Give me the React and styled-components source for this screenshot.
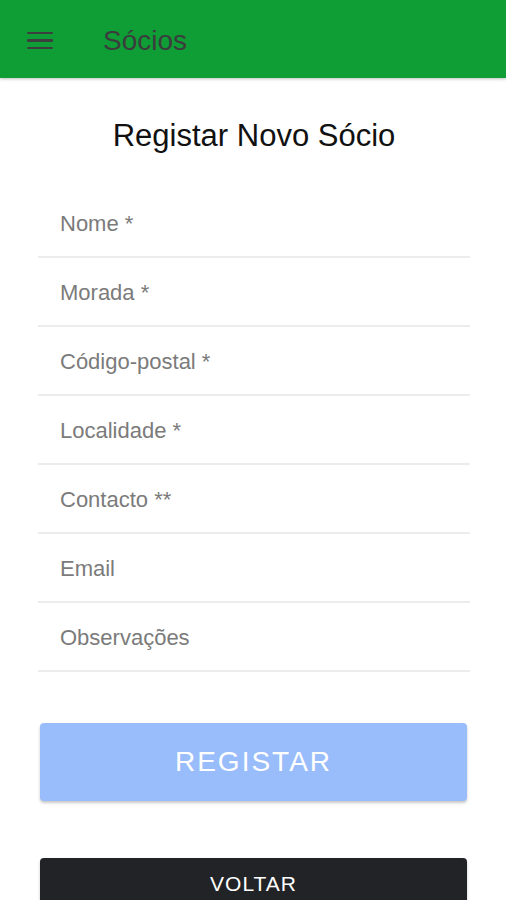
import React from "react";
import styled, { createGlobalStyle } from "styled-components";

const GlobalStyle = createGlobalStyle`
  html, body {
    margin: 0;
    padding: 0;
    background: #ffffff;
    font-family: "Liberation Sans", Arial, sans-serif;
  }
`;

const Page = styled.div`
  width: 506px;
  height: 900px;
  overflow: hidden;
  background: #fff;
`;

const TopBar = styled.header`
  height: 78px;
  box-sizing: border-box;
  padding: 3px 0 0 27px;
  background: #0f9d36;
  display: flex;
  align-items: center;
  box-shadow: 0 1px 3px rgba(0, 0, 0, 0.25);
  position: relative;
  z-index: 1;
`;

const MenuButton = styled.div`
  width: 26px;
  display: flex;
  flex-direction: column;
  gap: 5px;
  margin-right: 50px;

  span {
    display: block;
    height: 2.5px;
    background: #3c3f3e;
    border-radius: 1px;
  }
`;

const BarTitle = styled.h1`
  margin: 0;
  font-size: 28px;
  font-weight: normal;
  color: #3a3d3c;
`;

const Content = styled.main`
  padding: 0 36px 0 38px;
`;

const Heading = styled.h2`
  margin: 0;
  padding-top: 40px;
  text-align: center;
  font-size: 31px;
  font-weight: normal;
  color: #111;
  height: 71px;
  box-sizing: border-box;
`;

const Fields = styled.div`
  margin-top: 40px;
  display: flex;
  flex-direction: column;
`;

const Field = styled.div`
  height: 69px;
  box-sizing: border-box;
  border-bottom: 2px solid #ececec;
  display: flex;
  align-items: center;
  padding-left: 22px;
  padding-top: 3px;
  font-size: 22px;
  color: #7b7b7b;
`;

const Actions = styled.div`
  padding: 51px 3px 0 2px;
  display: flex;
  flex-direction: column;
  gap: 57px;
`;

const Button = styled.button`
  display: block;
  width: 100%;
  flex-shrink: 0;
  border: none;
  border-radius: ${(p) => (p.$dark ? "4px 4px 0 0" : "4px")};
  background: ${(p) => (p.$dark ? "#222327" : "#99bdfa")};
  color: #fff;
  font-family: "Liberation Sans", Arial, sans-serif;
  font-size: ${(p) => (p.$dark ? "21px" : "28px")};
  letter-spacing: ${(p) => (p.$dark ? "1px" : "2px")};
  height: ${(p) => (p.$dark ? "52px" : "78px")};
  padding: 0;
  box-shadow: 0 2px 3px rgba(0, 0, 0, 0.22);
  text-align: center;
`;

const labels = [
  "Nome *",
  "Morada *",
  "Código-postal *",
  "Localidade *",
  "Contacto **",
  "Email",
  "Observações",
];

export default function App() {
  return (
    <Page>
      <GlobalStyle />
      <TopBar>
        <MenuButton>
          <span />
          <span />
          <span />
        </MenuButton>
        <BarTitle>Sócios</BarTitle>
      </TopBar>
      <Content>
        <Heading>Registar Novo Sócio</Heading>
        <Fields>
          {labels.map((l) => (
            <Field key={l}>{l}</Field>
          ))}
        </Fields>
        <Actions>
          <Button>REGISTAR</Button>
          <Button $dark>VOLTAR</Button>
        </Actions>
      </Content>
    </Page>
  );
}
